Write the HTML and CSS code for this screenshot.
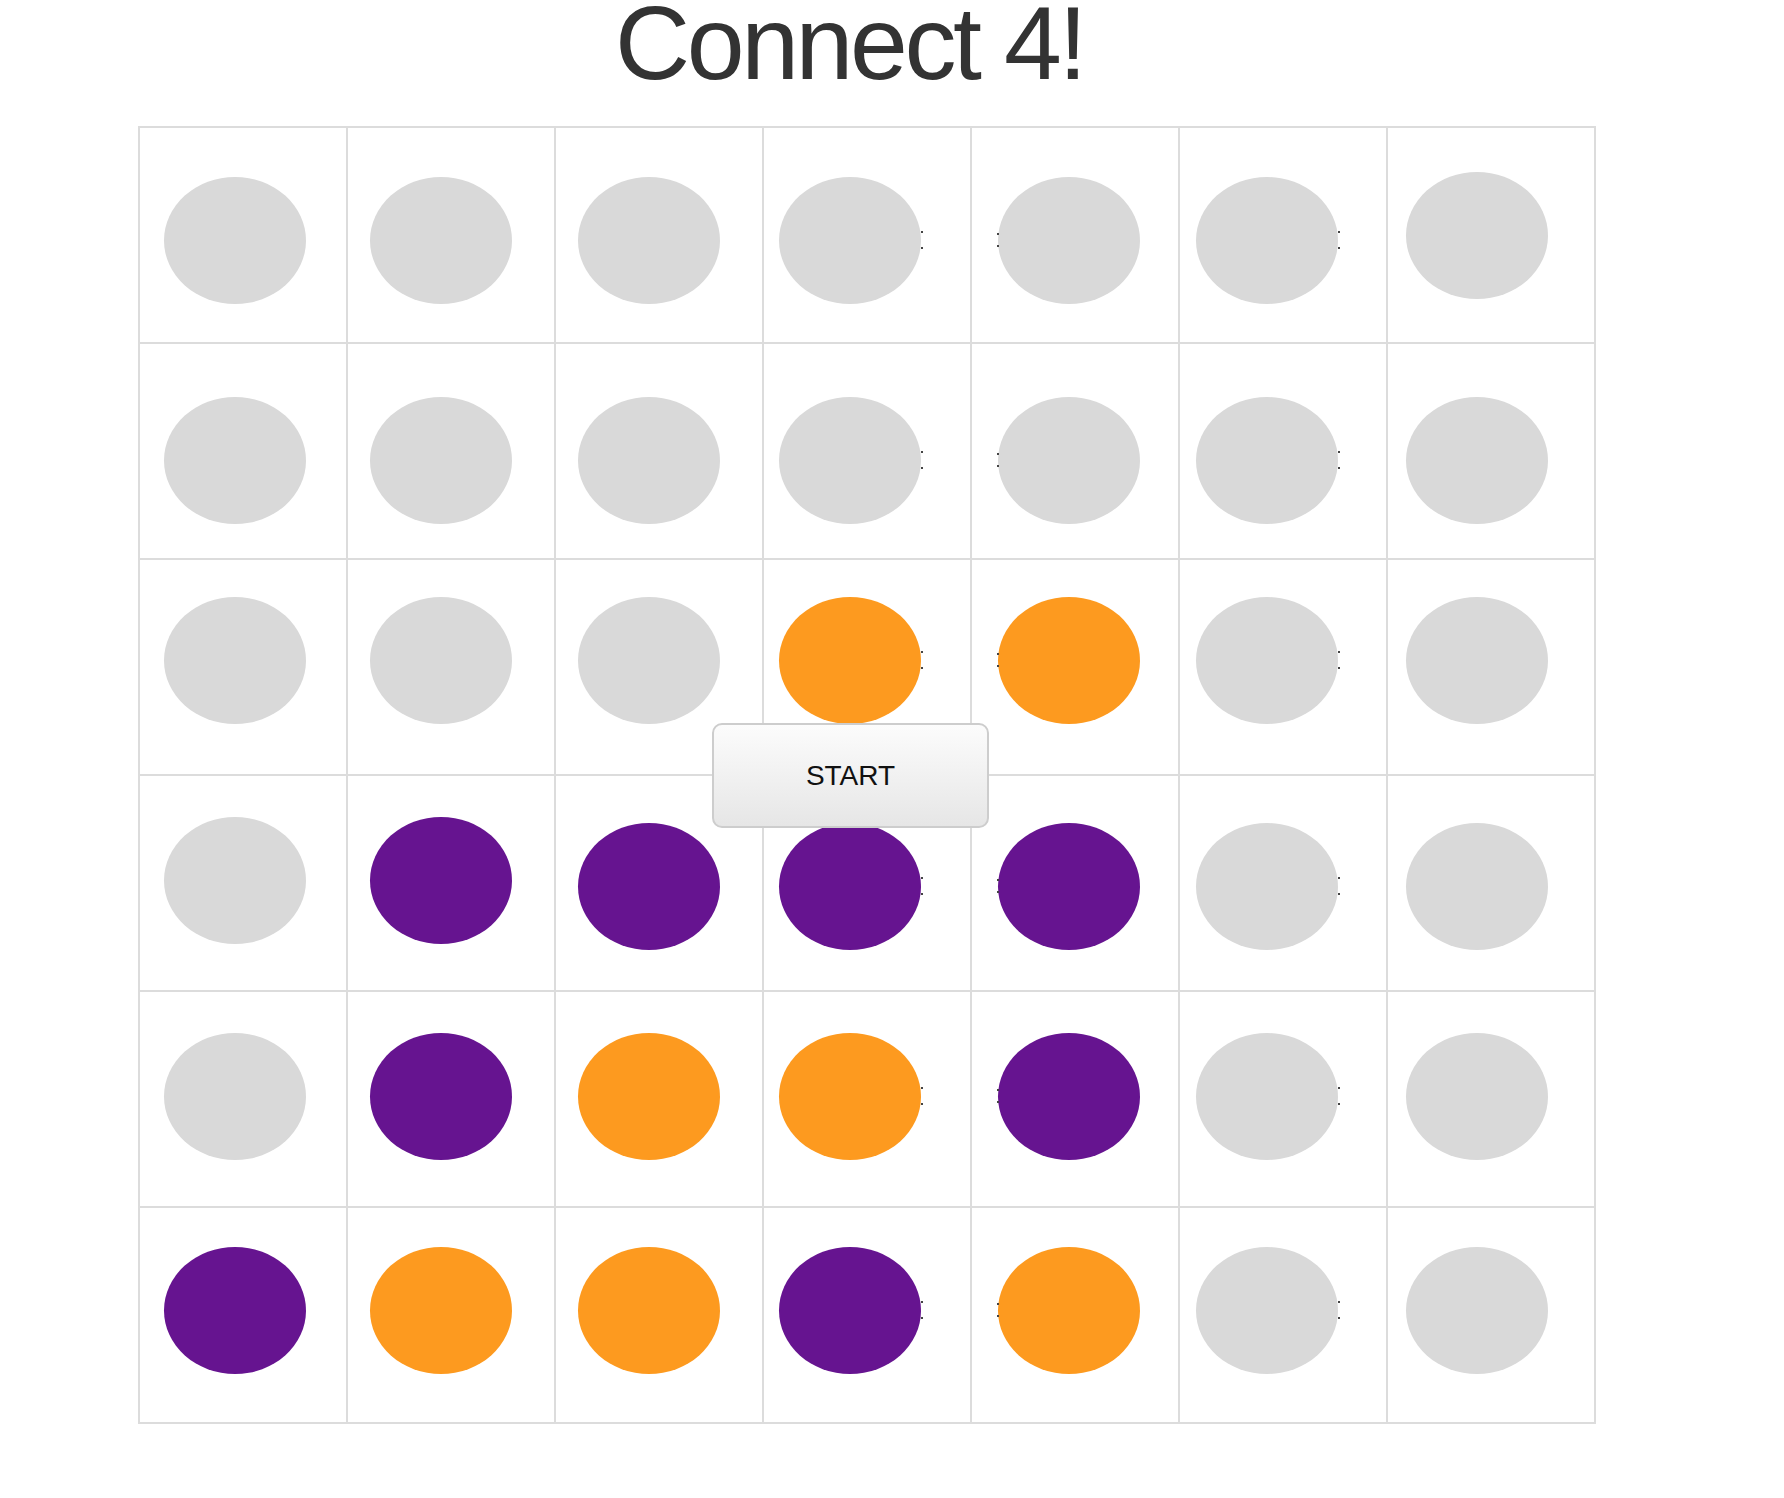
FILE: index.html
```html
<!DOCTYPE html>
<html lang="en">

<head>
    <meta charset="UTF-8">
    <meta name="viewport" content="width=device-width, initial-scale=1.0">
    <title>Connect 4!</title>
    <link rel="stylesheet" href="styles.css">
</head>

<body>
    <div class="page">
        <h1 class="title">Connect 4!</h1>

        <div class="board">
            <div class="row row-1">
                <div class="cell"><div class="disc"></div></div>
                <div class="cell"><div class="disc"></div></div>
                <div class="cell"><div class="disc"></div></div>
                <div class="cell"><div class="disc"></div></div>
                <div class="cell"><div class="disc"></div></div>
                <div class="cell"><div class="disc"></div></div>
                <div class="cell"><div class="disc raised"></div></div>
            </div>
            <div class="row row-2">
                <div class="cell"><div class="disc"></div></div>
                <div class="cell"><div class="disc"></div></div>
                <div class="cell"><div class="disc"></div></div>
                <div class="cell"><div class="disc"></div></div>
                <div class="cell"><div class="disc"></div></div>
                <div class="cell"><div class="disc"></div></div>
                <div class="cell"><div class="disc"></div></div>
            </div>
            <div class="row row-3">
                <div class="cell"><div class="disc"></div></div>
                <div class="cell"><div class="disc"></div></div>
                <div class="cell"><div class="disc"></div></div>
                <div class="cell"><div class="disc orange"></div></div>
                <div class="cell"><div class="disc orange"></div></div>
                <div class="cell"><div class="disc"></div></div>
                <div class="cell"><div class="disc"></div></div>
            </div>
            <div class="row row-4">
                <div class="cell"><div class="disc raised"></div></div>
                <div class="cell"><div class="disc purple raised"></div></div>
                <div class="cell"><div class="disc purple"></div></div>
                <div class="cell"><div class="disc purple"></div></div>
                <div class="cell"><div class="disc purple"></div></div>
                <div class="cell"><div class="disc"></div></div>
                <div class="cell"><div class="disc"></div></div>
            </div>
            <div class="row row-5">
                <div class="cell"><div class="disc"></div></div>
                <div class="cell"><div class="disc purple"></div></div>
                <div class="cell"><div class="disc orange"></div></div>
                <div class="cell"><div class="disc orange"></div></div>
                <div class="cell"><div class="disc purple"></div></div>
                <div class="cell"><div class="disc"></div></div>
                <div class="cell"><div class="disc"></div></div>
            </div>
            <div class="row row-6">
                <div class="cell"><div class="disc purple"></div></div>
                <div class="cell"><div class="disc orange"></div></div>
                <div class="cell"><div class="disc orange"></div></div>
                <div class="cell"><div class="disc purple"></div></div>
                <div class="cell"><div class="disc orange"></div></div>
                <div class="cell"><div class="disc"></div></div>
                <div class="cell"><div class="disc"></div></div>
            </div>

            <button type="button" class="start">START</button>
        </div>
    </div>
</body>

</html>
```

FILE: styles.css
```css
* {
    box-sizing: border-box;
}
body {
    margin: 0;
    background: #fff;
    font-family: "Liberation Sans", Arial, sans-serif;
}
.page {
    padding-left: 138px;
    padding-bottom: 70px;
}
.title {
    margin: 0 0 40px 477px;
    font-size: 104px;
    line-height: 86px;
    font-weight: normal;
    letter-spacing: -3.4px;
    color: #333;
    white-space: nowrap;
}

/* board lines come from the background showing through the gaps */
.board {
    position: relative;
    display: flex;
    flex-direction: column;
    gap: 2px;
    width: 1458px;
    padding: 2px;
    background: #dcdcdc;
}
.row {
    display: grid;
    grid-template-columns: repeat(7, 206px);
    gap: 2px;
    height: 214px;
}
.cell {
    background: #fff;
}
.disc {
    position: relative;
    z-index: 0;
    width: 142px;
    height: 127px;
    border-radius: 50%;
    background: #d9d9d9;
}
.disc.orange {
    background: #fd9a1f;
}
.disc.purple {
    background: #661490;
}

/* pieces don't sit quite centred in their cells */
.cell:nth-child(1) .disc { margin-left: 24px; }
.cell:nth-child(2) .disc { margin-left: 22px; }
.cell:nth-child(3) .disc { margin-left: 22px; }
.cell:nth-child(4) .disc { margin-left: 15px; }
.cell:nth-child(5) .disc { margin-left: 26px; }
.cell:nth-child(6) .disc { margin-left: 16px; }
.cell:nth-child(7) .disc { margin-left: 18px; }

.row-1 .disc { margin-top: 49px; }
.row-1 .disc.raised { margin-top: 44px; }
.row-2 .disc { margin-top: 53px; }
.row-3 .disc { margin-top: 37px; }
.row-4 .disc { margin-top: 47px; }
.row-4 .disc.raised { margin-top: 41px; }
.row-5 .disc { margin-top: 41px; }
.row-6 .disc { margin-top: 39px; }

/* stray colon peeking out behind the middle pieces */
.cell:nth-child(4) .disc::after,
.cell:nth-child(5) .disc::after,
.cell:nth-child(6) .disc::after {
    content: "";
    position: absolute;
    top: 54px;
    right: -2px;
    width: 2px;
    height: 14px;
    border-top: 2px solid #444;
    border-bottom: 2px solid #444;
    z-index: -1;
}
.cell:nth-child(5) .disc::after {
    right: auto;
    left: -1px;
    top: 56px;
    height: 10px;
}

.start {
    position: absolute;
    left: 574px;
    top: 597px;
    width: 277px;
    height: 105px;
    border: 2px solid #cdcdcd;
    border-radius: 10px;
    background: linear-gradient(#fcfcfc, #e6e6e6);
    font-family: "Liberation Sans", Arial, sans-serif;
    font-size: 28px;
    color: #111;
    cursor: pointer;
}
.start:hover {
    filter: brightness(.97);
}
```
